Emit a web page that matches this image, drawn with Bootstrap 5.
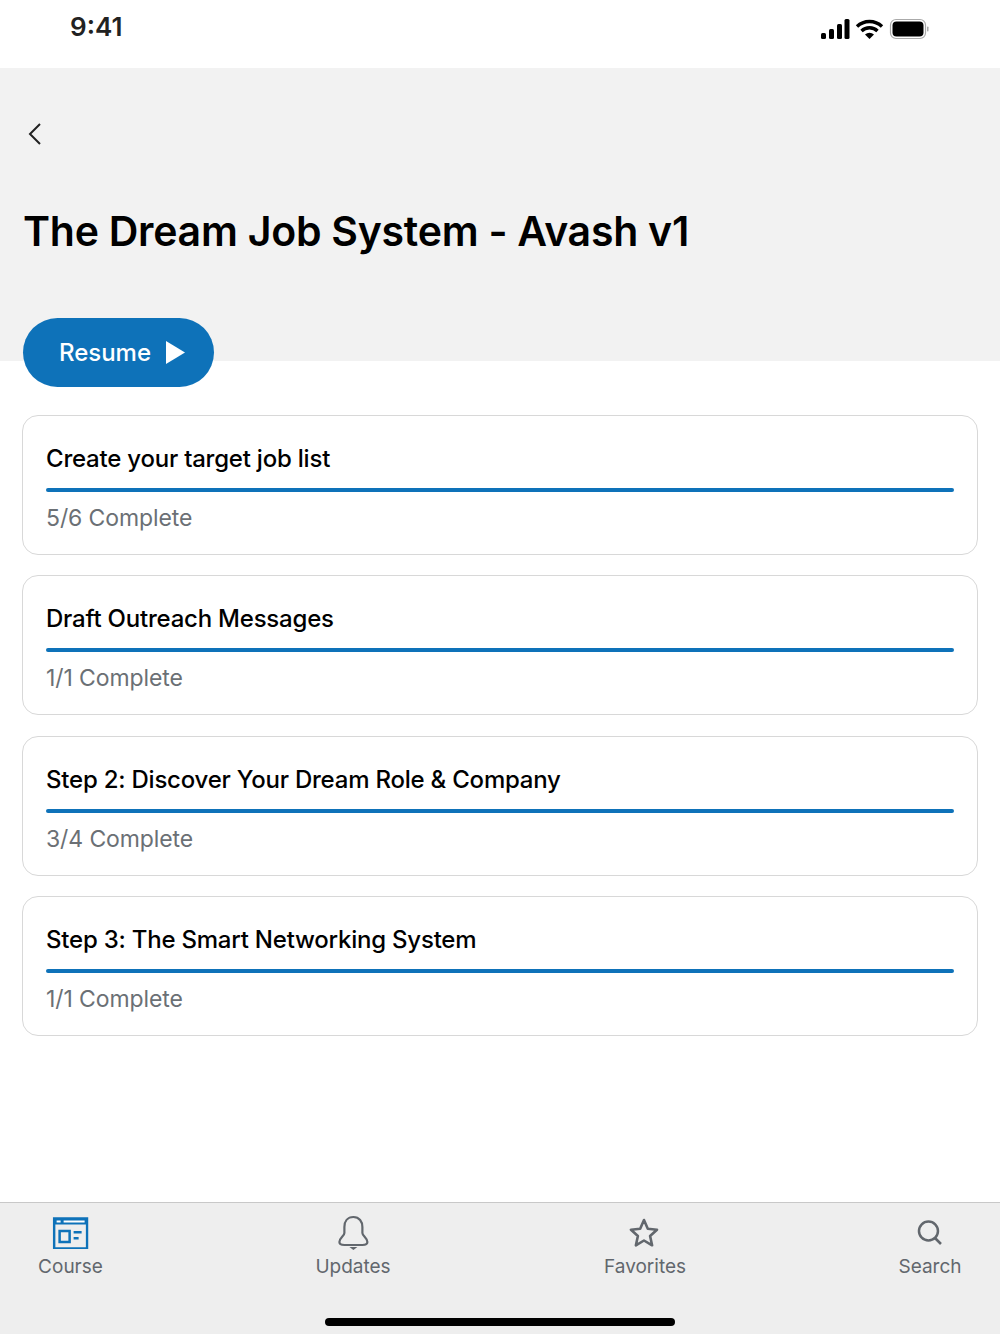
<!DOCTYPE html>
<html lang="en">
<head>
<meta charset="UTF-8">
<meta name="viewport" content="width=device-width, initial-scale=1.0">
<title>The Dream Job System</title>
<link rel="stylesheet" href="https://cdn.jsdelivr.net/npm/bootstrap@5.3.0/dist/css/bootstrap.min.css">
<style>
html, body { height: 1334px; overflow: hidden; }
body { font-family: Inter, "Liberation Sans", sans-serif; background: #fff; color: #000; }
.screen { height: 1334px; }
.status-bar { height: 68px; padding: 0 70px 0 70px; }
.status-time { font-size: 26px; font-weight: 600; color: #222; line-height: 1; margin-top: -14px; }
.status-icons { margin-top: -8px; }
.course-head { background: #f2f2f2; height: 292.5px; padding: 52px 24px 0; }
.back-link { display: block; width: 24px; height: 24px; }
.course-title { font-size: 41px; font-weight: 600; line-height: 50px; letter-spacing: -0.25px; margin: 62px 0 0 -1px; }
.resume-btn { width: 191px; height: 69px; margin: -42.500px 0 0 23px; background: #0e72b9; border: 0; border-radius: 35px; color: #fff; font-size: 24px; font-weight: 500; gap: 15px; position: relative; padding: 0 0 0 7px; }
.resume-btn:hover { background: #0e72b9; color: #fff; }
.section-list { padding: 28px 22px 0; gap: 20.33px; }
.section-card { height: 140px; border: 1px solid #d8d8d8; border-radius: 16px; padding: 0 23px; }
.section-name { font-size: 24px; font-weight: 500; line-height: 30px; margin-top: 28px; letter-spacing: -0.22px; }
.section-bar { height: 4px; background: #0e72b9; border-radius: 2px; margin-top: 14px; }
.section-count { font-size: 23px; line-height: 30px; color: #6b7075; margin-top: 11px; letter-spacing: -0.1px; }
.tab-bar { height: 132px; background: #eeeeee; border-top: 1px solid #c8c8c8; position: relative; }
.tab-item { position: absolute; top: 12px; transform: translateX(-50%); color: #62676d; font-size: 19px; line-height: 24px; }
.tab-icon { height: 40px; }
.home-line { position: absolute; left: 325px; bottom: 8px; width: 350px; height: 8px; border-radius: 4px; background: #000; }
</style>
</head>
<body>
<div class="screen d-flex flex-column">
  <div class="status-bar d-flex justify-content-between align-items-center">
    <div class="status-time">9:41</div>
    <div class="status-icons d-flex align-items-center">
      <svg width="110" height="24" viewBox="0 0 110 24">
        <rect x="1" y="15" width="5" height="6" rx="1.5"/><rect x="9" y="11" width="5" height="10" rx="1.5"/><rect x="17" y="6" width="5" height="15" rx="1.5"/><rect x="24.500" y="1" width="5" height="20" rx="1.5"/>
        <path d="M37 8.500a18 18 0 0 1 25 0M41.500 13a11.500 11.500 0 0 1 16 0" fill="none" stroke="#000" stroke-width="3.400"/>
        <path d="M45 16.500a7 7 0 0 1 9 0l-4.500 4.500z"/>
        <rect x="70.500" y="1.500" width="35" height="19" rx="5.500" fill="#fff" stroke="#aaa" stroke-width="1.200"/>
        <rect x="72.500" y="3.500" width="31" height="15" rx="4"/>
        <rect x="107" y="8.500" width="1.500" height="5" rx="0.700" fill="#aaa"/>
      </svg>
    </div>
  </div>
  <div class="course-head">
    <a href="#" class="back-link">
      <svg width="24" height="24" viewBox="0 0 24 24"><path d="M16 2 6 12l10 10" fill="none" stroke="#222" stroke-width="2"/></svg>
    </a>
    <h1 class="course-title">The Dream Job System - Avash v1</h1>
  </div>
  <button class="btn resume-btn d-flex align-items-center justify-content-center">
    <span>Resume</span>
    <svg width="19" height="23" viewBox="0 0 19 23"><path d="M0 0 19 11.500 0 23z" fill="#fff"/></svg>
  </button>
  <div class="section-list d-flex flex-column">
    <div class="section-card">
      <div class="section-name">Create your target job list</div>
      <div class="section-bar"></div>
      <div class="section-count">5/6 Complete</div>
    </div>
    <div class="section-card">
      <div class="section-name">Draft Outreach Messages</div>
      <div class="section-bar"></div>
      <div class="section-count">1/1 Complete</div>
    </div>
    <div class="section-card">
      <div class="section-name">Step 2: Discover Your Dream Role &amp; Company</div>
      <div class="section-bar"></div>
      <div class="section-count">3/4 Complete</div>
    </div>
    <div class="section-card">
      <div class="section-name">Step 3: The Smart Networking System</div>
      <div class="section-bar"></div>
      <div class="section-count">1/1 Complete</div>
    </div>
  </div>
  <div class="tab-bar mt-auto">
    <div class="tab-item text-center" style="left:70.500px">
      <div class="tab-icon"><svg width="36" height="34" viewBox="0 -2 36 34"><rect x="1.500" y="1.500" width="33" height="30" fill="none" stroke="#0e72b9" stroke-width="2.500"/><rect x="1.500" y="1.500" width="33" height="6" fill="#0e72b9"/><rect x="4" y="3.500" width="4" height="2" fill="#fff"/><rect x="11" y="3.500" width="21" height="2" fill="#fff"/><rect x="7" y="14" width="10" height="11" fill="none" stroke="#0e72b9" stroke-width="2.500"/><rect x="21" y="14" width="8" height="2.500" fill="#0e72b9"/><rect x="21" y="20" width="5" height="2.500" fill="#0e72b9"/></svg></div>
      <div>Course</div>
    </div>
    <div class="tab-item text-center" style="left:353px">
      <div class="tab-icon"><svg width="34" height="36" viewBox="0 0 34 36"><path d="M17 2c-6 0-9 4.500-9 10v6c0 3-5 5-5 9 0 2 2 3 5 3h18c3 0 5-1 5-3 0-4-5-6-5-9v-6c0-5.500-3-10-9-10z" fill="none" stroke="#62676d" stroke-width="2.200"/><path d="M13 32h8l-4 3z" fill="#62676d"/></svg></div>
      <div>Updates</div>
    </div>
    <div class="tab-item text-center" style="left:645px">
      <div class="tab-icon"><svg width="32" height="32" viewBox="0 -2 32 32"><path d="m15 3 3.800 8.700 9.200 1-6.900 6.300 2 9.300-8.100-4.800-8.100 4.800 2-9.300L2 12.700l9.200-1z" fill="none" stroke="#62676d" stroke-width="2.600" stroke-linejoin="round"/></svg></div>
      <div>Favorites</div>
    </div>
    <div class="tab-item text-center" style="left:930px">
      <div class="tab-icon"><svg width="28" height="28" viewBox="0 -1 28 28" class="mt-1"><circle cx="12" cy="11" r="9.500" fill="none" stroke="#62676d" stroke-width="2.500"/><path d="m18.500 18 6 6" stroke="#62676d" stroke-width="2.500"/></svg></div>
      <div>Search</div>
    </div>
    <div class="home-line"></div>
  </div>
</div>
<script src="https://cdn.jsdelivr.net/npm/bootstrap@5.3.0/dist/js/bootstrap.bundle.min.js"></script>
</body>
</html>
